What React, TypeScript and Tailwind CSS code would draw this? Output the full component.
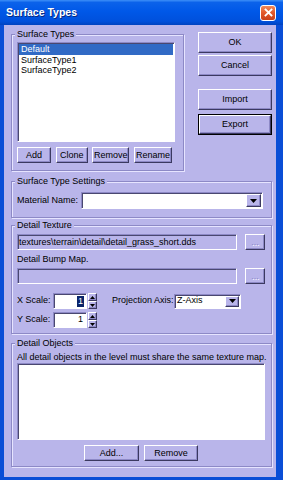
import React from "react";

const BG = "bg-[#b9b5ea]";
const raised =
  "border border-t-white border-l-white border-r-[#3b3960] border-b-[#3b3960] shadow-[inset_-1px_-1px_0_#8d89c6]";
const sunken =
  "border border-t-[#8d89c6] border-l-[#8d89c6] border-r-white border-b-white shadow-[inset_1px_1px_0_#4a4870]";
const fieldset =
  "border border-[#8d89c6] shadow-[inset_1px_1px_0_#e6e4ff,1px_1px_0_#e6e4ff] min-w-0";
const legend = `px-[2px] -ml-[2px] leading-[13px] ${BG}`;

function Btn({ label, className = "" }: { label: string; className?: string }) {
  return (
    <div
      className={`${raised} ${BG} flex items-center justify-center leading-none ${className}`}
    >
      {label}
    </div>
  );
}

function ArrowBtn({ className = "" }: { className?: string }) {
  return (
    <div className={`${raised} ${BG} flex items-center justify-center ${className}`}>
      <svg width="7" height="4" viewBox="0 0 7 4">
        <path d="M0 0 H7 L3.5 4 Z" fill="#000" />
      </svg>
    </div>
  );
}

function Spin() {
  return (
    <div className="flex flex-col w-[9px] h-[16px] ml-[1px]">
      <div className={`${raised} ${BG} h-[8px] flex items-center justify-center`}>
        <svg width="5" height="3" viewBox="0 0 5 3">
          <path d="M2.5 0 L5 3 H0 Z" fill="#000" />
        </svg>
      </div>
      <div className={`${raised} ${BG} h-[8px] flex items-center justify-center`}>
        <svg width="5" height="3" viewBox="0 0 5 3">
          <path d="M0 0 H5 L2.5 3 Z" fill="#000" />
        </svg>
      </div>
    </div>
  );
}

export default function App() {
  return (
    <div className="w-[283px] h-[480px] bg-[#0a4ed6] flex flex-col font-['Liberation_Sans',Arial,sans-serif] text-[9px] text-black select-none overflow-hidden">
      {/* Title bar */}
      <div className="h-[25px] flex items-center pl-[6px] pr-[7px] bg-[linear-gradient(180deg,#3d8ff8_0%,#0b62ea_10%,#0058e8_45%,#0050dc_85%,#0043c0_100%)]">
        <span className="text-white font-bold text-[10.5px] flex-1 [text-shadow:1px_1px_0_#0a2a80]">
          Surface Types
        </span>
        <div className="w-[16px] h-[16px] rounded-[3px] border border-white bg-[linear-gradient(180deg,#f08a5a_0%,#e2572a_50%,#c8401a_100%)] flex items-center justify-center">
          <svg width="9" height="9" viewBox="0 0 9 9">
            <path d="M1.5 1.5 L7.5 7.5 M7.5 1.5 L1.5 7.5" stroke="#fff" strokeWidth="1.8" strokeLinecap="square" />
          </svg>
        </div>
      </div>

      {/* Client */}
      <div className={`flex-1 ml-[4px] mr-[7px] mb-[3px] ${BG} pl-[7px] pr-[4px] pt-[3px] flex flex-col`}>
        {/* Row 1 */}
        <div className="flex items-start">
          <fieldset className={`${fieldset} w-[173px] pl-[5px] pr-[8px] pt-[1px] pb-[7px]`}>
            <legend className={legend}>Surface Types</legend>
            <div className={`${sunken} bg-white h-[100px] p-[1px]`}>
              <div className="h-[11px] leading-[11px] bg-[#316ac5] text-white pl-[2px]">Default</div>
              <div className="h-[10px] leading-[11px] pl-[2px]">SurfaceType1</div>
              <div className="h-[10px] leading-[11px] pl-[2px]">SurfaceType2</div>
            </div>
            <div className="mt-[5px] flex justify-between w-[155px]">
              <Btn label="Add" className="w-[34px] h-[16px]" />
              <Btn label="Clone" className="w-[32px] h-[16px]" />
              <Btn label="Remove" className="w-[37px] h-[16px]" />
              <Btn label="Rename" className="w-[38px] h-[16px]" />
            </div>
          </fieldset>
          <div className="ml-auto w-[74px] flex flex-col mt-[4px]">
            <Btn label="OK" className="h-[21px]" />
            <Btn label="Cancel" className="h-[21px] mt-[2px]" />
            <Btn label="Import" className="h-[21px] mt-[13px]" />
            <div className="mt-[4px] h-[21px] border border-black">
              <Btn label="Export" className="h-full" />
            </div>
          </div>
        </div>

        {/* Surface Type Settings */}
        <fieldset className={`${fieldset} mt-[4px] pl-[5px] pr-[8px] pt-[4px] pb-[8px]`}>
          <legend className={legend}>Surface Type Settings</legend>
          <div className="flex items-center h-[17px]">
            <span className="w-[64px]">Material Name:</span>
            <div className={`${sunken} bg-white flex-1 h-[17px] flex items-center justify-end pr-[1px]`}>
              <ArrowBtn className="w-[15px] h-[13px]" />
            </div>
          </div>
        </fieldset>

        {/* Detail Texture */}
        <fieldset className={`${fieldset} mt-[1px] pl-[5px] pr-[6px] pt-[2px] pb-[5px]`}>
          <legend className={legend}>Detail Texture</legend>
          <div className="flex items-center h-[16px]">
            <div className={`${sunken} flex-1 h-[16px] leading-[14px] pl-[1px] whitespace-nowrap overflow-hidden`}>
              textures\terrain\detail\detail_grass_short.dds
            </div>
            <Btn label="..." className="w-[20px] h-[16px] ml-[8px] text-[#8d89c6] [text-shadow:1px_1px_0_#fff]" />
          </div>
          <div className="mt-[3px] leading-[13px]">Detail Bump Map.</div>
          <div className="flex items-center h-[16px] mt-[2px]">
            <div className={`${sunken} flex-1 h-[16px]`} />
            <Btn label="..." className="w-[20px] h-[16px] ml-[8px] text-[#8d89c6] [text-shadow:1px_1px_0_#fff]" />
          </div>
          <div className="flex items-center h-[16px] mt-[9px]">
            <span className="w-[36px]">X Scale:</span>
            <div className={`${sunken} bg-white w-[34px] h-[16px] flex items-center justify-end pr-[2px]`}>
              <span className="bg-[#0a246a] text-white px-[1px] leading-[11px]">1</span>
            </div>
            <Spin />
            <span className="ml-[15px] w-[62px]">Projection Axis:</span>
            <div className={`${sunken} bg-white w-[67px] h-[15px] flex items-center pl-[2px] pr-[1px]`}>
              <span className="flex-1">Z-Axis</span>
              <ArrowBtn className="w-[14px] h-[11px]" />
            </div>
          </div>
          <div className="flex items-center h-[16px] mt-[3px]">
            <span className="w-[36px]">Y Scale:</span>
            <div className={`${sunken} bg-white w-[34px] h-[16px] flex items-center justify-end pr-[3px]`}>
              <span>1</span>
            </div>
            <Spin />
          </div>
        </fieldset>

        {/* Detail Objects */}
        <fieldset className={`${fieldset} mt-[3px] pl-[5px] pr-[6px] pt-[1px] pb-[5px]`}>
          <legend className={legend}>Detail Objects</legend>
          <div className="leading-[12px] whitespace-nowrap">
            All detail objects in the level must share the same texture map.
          </div>
          <div className={`${sunken} bg-white h-[77px]`} />
          <div className="mt-[5px] flex justify-center gap-[5px]">
            <Btn label="Add..." className="w-[55px] h-[16px]" />
            <Btn label="Remove" className="w-[54px] h-[16px]" />
          </div>
        </fieldset>
      </div>
    </div>
  );
}
